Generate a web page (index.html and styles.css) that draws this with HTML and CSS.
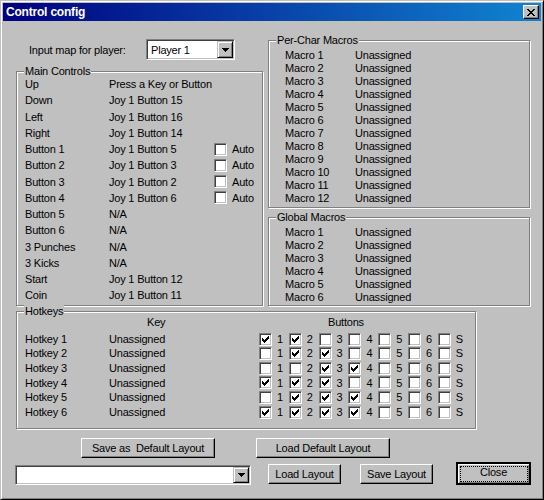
FILE: index.html
```html
<!DOCTYPE html>
<html>
<head>
<meta charset="utf-8">
<title>Control config</title>
<link rel="stylesheet" href="styles.css">
</head>
<body>
<svg class="defs" aria-hidden="true">
  <defs>
    <symbol id="chk" viewBox="1 1 11 11">
      <g fill="#000" shape-rendering="crispEdges">
        <rect x="3" y="5" width="1" height="3"/>
        <rect x="4" y="6" width="1" height="3"/>
        <rect x="5" y="7" width="1" height="3"/>
        <rect x="6" y="6" width="1" height="3"/>
        <rect x="7" y="5" width="1" height="3"/>
        <rect x="8" y="4" width="1" height="3"/>
        <rect x="9" y="3" width="1" height="3"/>
      </g>
    </symbol>
    <symbol id="arr" viewBox="0 0 7 4">
      <g fill="#000" shape-rendering="crispEdges">
        <rect x="0" y="0" width="7" height="1"/>
        <rect x="1" y="1" width="5" height="1"/>
        <rect x="2" y="2" width="3" height="1"/>
        <rect x="3" y="3" width="1" height="1"/>
      </g>
    </symbol>
  </defs>
</svg>
<div class="window">
  <div class="titlebar">
    <span class="title">Control config</span>
    <span class="title-close">
      <svg class="x-glyph" viewBox="0 0 8 7">
        <g fill="#000" shape-rendering="crispEdges">
          <rect x="0" y="0" width="2" height="1"/><rect x="6" y="0" width="2" height="1"/>
          <rect x="1" y="1" width="2" height="1"/><rect x="5" y="1" width="2" height="1"/>
          <rect x="2" y="2" width="4" height="1"/>
          <rect x="3" y="3" width="2" height="1"/>
          <rect x="2" y="4" width="4" height="1"/>
          <rect x="1" y="5" width="2" height="1"/><rect x="5" y="5" width="2" height="1"/>
          <rect x="0" y="6" width="2" height="1"/><rect x="6" y="6" width="2" height="1"/>
        </g>
      </svg>
    </span>
  </div>
  <div class="client">
    <div class="top">
      <div class="col-left">
        <div class="input-row">
          <span class="input-label">Input map for player:</span>
          <div class="combo combo-player">
            <span class="combo-text">Player 1</span>
            <span class="combo-btn"><svg class="arr"><use href="#arr"/></svg></span>
          </div>
        </div>
        <div class="group group-main">
          <span class="group-title">Main Controls</span>
          <div class="ctl-row"><span class="c-name">Up</span><span class="c-val">Press a Key or Button</span></div>
          <div class="ctl-row"><span class="c-name">Down</span><span class="c-val">Joy 1 Button 15</span></div>
          <div class="ctl-row"><span class="c-name">Left</span><span class="c-val">Joy 1 Button 16</span></div>
          <div class="ctl-row"><span class="c-name">Right</span><span class="c-val">Joy 1 Button 14</span></div>
          <div class="ctl-row"><span class="c-name">Button 1</span><span class="c-val">Joy 1 Button 5</span><span class="cb"></span><span class="cb-label">Auto</span></div>
          <div class="ctl-row"><span class="c-name">Button 2</span><span class="c-val">Joy 1 Button 3</span><span class="cb"></span><span class="cb-label">Auto</span></div>
          <div class="ctl-row"><span class="c-name">Button 3</span><span class="c-val">Joy 1 Button 2</span><span class="cb"></span><span class="cb-label">Auto</span></div>
          <div class="ctl-row"><span class="c-name">Button 4</span><span class="c-val">Joy 1 Button 6</span><span class="cb"></span><span class="cb-label">Auto</span></div>
          <div class="ctl-row"><span class="c-name">Button 5</span><span class="c-val">N/A</span></div>
          <div class="ctl-row"><span class="c-name">Button 6</span><span class="c-val">N/A</span></div>
          <div class="ctl-row"><span class="c-name">3 Punches</span><span class="c-val">N/A</span></div>
          <div class="ctl-row"><span class="c-name">3 Kicks</span><span class="c-val">N/A</span></div>
          <div class="ctl-row"><span class="c-name">Start</span><span class="c-val">Joy 1 Button 12</span></div>
          <div class="ctl-row"><span class="c-name">Coin</span><span class="c-val">Joy 1 Button 11</span></div>
        </div>
      </div>
      <div class="col-right">
        <div class="group group-perchar">
          <span class="group-title">Per-Char Macros</span>
          <div class="m-row"><span class="m-name">Macro 1</span><span>Unassigned</span></div>
          <div class="m-row"><span class="m-name">Macro 2</span><span>Unassigned</span></div>
          <div class="m-row"><span class="m-name">Macro 3</span><span>Unassigned</span></div>
          <div class="m-row"><span class="m-name">Macro 4</span><span>Unassigned</span></div>
          <div class="m-row"><span class="m-name">Macro 5</span><span>Unassigned</span></div>
          <div class="m-row"><span class="m-name">Macro 6</span><span>Unassigned</span></div>
          <div class="m-row"><span class="m-name">Macro 7</span><span>Unassigned</span></div>
          <div class="m-row"><span class="m-name">Macro 8</span><span>Unassigned</span></div>
          <div class="m-row"><span class="m-name">Macro 9</span><span>Unassigned</span></div>
          <div class="m-row"><span class="m-name">Macro 10</span><span>Unassigned</span></div>
          <div class="m-row"><span class="m-name">Macro 11</span><span>Unassigned</span></div>
          <div class="m-row"><span class="m-name">Macro 12</span><span>Unassigned</span></div>
        </div>
        <div class="group group-global">
          <span class="group-title">Global Macros</span>
          <div class="m-row"><span class="m-name">Macro 1</span><span>Unassigned</span></div>
          <div class="m-row"><span class="m-name">Macro 2</span><span>Unassigned</span></div>
          <div class="m-row"><span class="m-name">Macro 3</span><span>Unassigned</span></div>
          <div class="m-row"><span class="m-name">Macro 4</span><span>Unassigned</span></div>
          <div class="m-row"><span class="m-name">Macro 5</span><span>Unassigned</span></div>
          <div class="m-row"><span class="m-name">Macro 6</span><span>Unassigned</span></div>
        </div>
      </div>
    </div>

    <div class="group group-hotkeys">
      <span class="group-title">Hotkeys</span>
      <div class="hk-head"><span class="hk-head-key">Key</span><span>Buttons</span></div>

      <div class="hk-row"><span class="hk-name">Hotkey 1</span><span class="hk-val">Unassigned</span>
        <div class="hk-boxes">
          <span class="hk-item"><span class="cb"><svg class="chk"><use href="#chk"/></svg></span><span>1</span></span>
          <span class="hk-item"><span class="cb"><svg class="chk"><use href="#chk"/></svg></span><span>2</span></span>
          <span class="hk-item"><span class="cb"></span><span>3</span></span>
          <span class="hk-item"><span class="cb"></span><span>4</span></span>
          <span class="hk-item"><span class="cb"></span><span>5</span></span>
          <span class="hk-item"><span class="cb"></span><span>6</span></span>
          <span class="hk-item"><span class="cb"></span><span>S</span></span>
        </div>
      </div>
      <div class="hk-row"><span class="hk-name">Hotkey 2</span><span class="hk-val">Unassigned</span>
        <div class="hk-boxes">
          <span class="hk-item"><span class="cb"></span><span>1</span></span>
          <span class="hk-item"><span class="cb"><svg class="chk"><use href="#chk"/></svg></span><span>2</span></span>
          <span class="hk-item"><span class="cb"><svg class="chk"><use href="#chk"/></svg></span><span>3</span></span>
          <span class="hk-item"><span class="cb"></span><span>4</span></span>
          <span class="hk-item"><span class="cb"></span><span>5</span></span>
          <span class="hk-item"><span class="cb"></span><span>6</span></span>
          <span class="hk-item"><span class="cb"></span><span>S</span></span>
        </div>
      </div>
      <div class="hk-row"><span class="hk-name">Hotkey 3</span><span class="hk-val">Unassigned</span>
        <div class="hk-boxes">
          <span class="hk-item"><span class="cb"></span><span>1</span></span>
          <span class="hk-item"><span class="cb"></span><span>2</span></span>
          <span class="hk-item"><span class="cb"><svg class="chk"><use href="#chk"/></svg></span><span>3</span></span>
          <span class="hk-item"><span class="cb"><svg class="chk"><use href="#chk"/></svg></span><span>4</span></span>
          <span class="hk-item"><span class="cb"></span><span>5</span></span>
          <span class="hk-item"><span class="cb"></span><span>6</span></span>
          <span class="hk-item"><span class="cb"></span><span>S</span></span>
        </div>
      </div>
      <div class="hk-row"><span class="hk-name">Hotkey 4</span><span class="hk-val">Unassigned</span>
        <div class="hk-boxes">
          <span class="hk-item"><span class="cb"><svg class="chk"><use href="#chk"/></svg></span><span>1</span></span>
          <span class="hk-item"><span class="cb"><svg class="chk"><use href="#chk"/></svg></span><span>2</span></span>
          <span class="hk-item"><span class="cb"><svg class="chk"><use href="#chk"/></svg></span><span>3</span></span>
          <span class="hk-item"><span class="cb"></span><span>4</span></span>
          <span class="hk-item"><span class="cb"></span><span>5</span></span>
          <span class="hk-item"><span class="cb"></span><span>6</span></span>
          <span class="hk-item"><span class="cb"></span><span>S</span></span>
        </div>
      </div>
      <div class="hk-row"><span class="hk-name">Hotkey 5</span><span class="hk-val">Unassigned</span>
        <div class="hk-boxes">
          <span class="hk-item"><span class="cb"></span><span>1</span></span>
          <span class="hk-item"><span class="cb"><svg class="chk"><use href="#chk"/></svg></span><span>2</span></span>
          <span class="hk-item"><span class="cb"><svg class="chk"><use href="#chk"/></svg></span><span>3</span></span>
          <span class="hk-item"><span class="cb"><svg class="chk"><use href="#chk"/></svg></span><span>4</span></span>
          <span class="hk-item"><span class="cb"></span><span>5</span></span>
          <span class="hk-item"><span class="cb"></span><span>6</span></span>
          <span class="hk-item"><span class="cb"></span><span>S</span></span>
        </div>
      </div>
      <div class="hk-row"><span class="hk-name">Hotkey 6</span><span class="hk-val">Unassigned</span>
        <div class="hk-boxes">
          <span class="hk-item"><span class="cb"><svg class="chk"><use href="#chk"/></svg></span><span>1</span></span>
          <span class="hk-item"><span class="cb"><svg class="chk"><use href="#chk"/></svg></span><span>2</span></span>
          <span class="hk-item"><span class="cb"><svg class="chk"><use href="#chk"/></svg></span><span>3</span></span>
          <span class="hk-item"><span class="cb"><svg class="chk"><use href="#chk"/></svg></span><span>4</span></span>
          <span class="hk-item"><span class="cb"></span><span>5</span></span>
          <span class="hk-item"><span class="cb"></span><span>6</span></span>
          <span class="hk-item"><span class="cb"></span><span>S</span></span>
        </div>
      </div>
    </div>

    <div class="btn-row1">
      <button class="btn btn-wide btn-savedef">Save as&nbsp; Default Layout</button>
      <button class="btn btn-wide btn-loaddef">Load Default Layout</button>
    </div>
    <div class="btn-row2">
      <div class="combo combo-layout">
        <span class="combo-text"></span>
        <span class="combo-btn"><svg class="arr"><use href="#arr"/></svg></span>
      </div>
      <button class="btn btn-small btn-load">Load Layout</button>
      <button class="btn btn-small btn-save">Save Layout</button>
      <button class="btn btn-close">Close</button>
    </div>
  </div>
</div>
</body>
</html>
```
FILE: styles.css
```css
html, body {
  margin: 0;
  padding: 0;
  background: #c0c0c0;
}
body {
  width: 544px;
  height: 500px;
  overflow: hidden;
}
.defs {
  position: absolute;
  width: 0;
  height: 0;
  overflow: hidden;
}
.window {
  box-sizing: border-box;
  width: 544px;
  height: 500px;
  background: #c0c0c0;
  border: 1px solid;
  border-color: #c0c0c0 #000 #000 #c0c0c0;
  box-shadow: inset 1px 1px #fff, inset -1px -1px #808080;
  padding: 2px;
  display: flex;
  flex-direction: column;
  font-family: "Liberation Sans", Arial, sans-serif;
  font-size: 11px;
  letter-spacing: -0.2px;
  color: #000;
}
.titlebar {
  flex: 0 0 18px;
  height: 18px;
  background: linear-gradient(to right, #000080, #1084d0);
  display: flex;
  align-items: center;
  justify-content: space-between;
  color: #fff;
}
.title {
  font-weight: bold;
  font-size: 12px;
  letter-spacing: -0.2px;
  line-height: 18px;
  padding-left: 3px;
}
.title-close {
  box-sizing: border-box;
  width: 16px;
  height: 14px;
  margin-right: 2px;
  background: #c0c0c0;
  border: 1px solid;
  border-color: #fff #000 #000 #fff;
  box-shadow: inset -1px -1px #808080;
  display: flex;
  align-items: center;
  justify-content: center;
}
.x-glyph {
  display: block;
  width: 8px;
  height: 7px;
  margin-left: -1px;
}
.client {
  flex: 1;
  display: flex;
  flex-direction: column;
}

/* top area */
.top {
  display: flex;
  margin-left: 13px;
  gap: 5px;
}
.col-left {
  width: 247px;
  display: flex;
  flex-direction: column;
}
.col-right {
  width: 262px;
  display: flex;
  flex-direction: column;
}
.input-row {
  display: flex;
  align-items: center;
  height: 21px;
  margin-top: 18px;
  padding-left: 13px;
}
.input-label {
  width: 117px;
}

/* combo box */
.combo {
  box-sizing: border-box;
  display: flex;
  align-items: stretch;
  background: #fff;
  border: 1px solid;
  border-color: #808080 #fff #fff #808080;
  box-shadow: inset 1px 1px #404040, inset -1px -1px #c0c0c0;
  padding: 1px;
}
.combo-player {
  width: 89px;
  height: 21px;
}
.combo-text {
  flex: 1;
  display: flex;
  align-items: center;
  padding-left: 3px;
}
.combo-btn {
  box-sizing: border-box;
  width: 16px;
  background: #c0c0c0;
  border: 1px solid;
  border-color: #c0c0c0 #000 #000 #c0c0c0;
  box-shadow: inset 1px 1px #fff, inset -1px -1px #808080;
  display: flex;
  align-items: center;
  justify-content: center;
}
.arr {
  display: block;
  width: 7px;
  height: 4px;
}

/* group boxes */
.group {
  position: relative;
  box-sizing: border-box;
  border: 1px solid #808080;
  box-shadow: inset 1px 1px #fff, 1px 1px #fff;
  padding-left: 8px;
}
.group-title {
  position: absolute;
  left: 7px;
  top: -7px;
  line-height: 13px;
  padding: 0 1px;
  background: #c0c0c0;
}
.group-main {
  height: 235px;
  margin-top: 11px;
  padding-top: 4px;
}
.ctl-row {
  display: flex;
  align-items: center;
  height: 16.25px;
  line-height: 16.25px;
}
.c-name {
  width: 84px;
  flex: 0 0 84px;
}
.c-val {
  width: 105px;
  flex: 0 0 105px;
}

.group-perchar {
  height: 168px;
  margin-top: 19px;
  padding-top: 7.5px;
  padding-left: 16px;
}
.group-global {
  height: 89px;
  margin-top: 9px;
  padding-top: 8px;
  padding-left: 16px;
}
.m-row {
  display: flex;
  height: 13px;
  line-height: 13px;
}
.m-name {
  width: 70px;
  flex: 0 0 70px;
}

/* checkbox */
.cb {
  box-sizing: border-box;
  flex: 0 0 13px;
  width: 13px;
  height: 13px;
  background: #fff;
  border: 1px solid;
  border-color: #808080 #fff #fff #808080;
  box-shadow: inset 1px 1px #404040, inset -1px -1px #c0c0c0;
  margin-right: 5px;
}
.chk {
  display: block;
  width: 11px;
  height: 11px;
}

/* hotkeys */
.group-hotkeys {
  width: 460px;
  height: 118px;
  margin: 5px 0 0 13px;
  padding-top: 2px;
}
.hk-head {
  display: flex;
  height: 17.75px;
  line-height: 16px;
}
.hk-head-key {
  margin-left: 122px;
  width: 181px;
}
.hk-row {
  display: flex;
  align-items: center;
  height: 14.625px;
  line-height: 14.625px;
}
.hk-name {
  flex: 0 0 84px;
}
.hk-val {
  flex: 0 0 150px;
}
.hk-boxes {
  display: flex;
  align-items: center;
}
.hk-item {
  flex: 0 0 29.8px;
  display: flex;
  align-items: center;
}

/* buttons */
.btn {
  box-sizing: border-box;
  height: 20px;
  margin: 0;
  padding: 0 0 1px 0;
  background: #c0c0c0;
  border: 1px solid;
  border-color: #fff #000 #000 #fff;
  box-shadow: inset -1px -1px #808080;
  font: inherit;
  letter-spacing: inherit;
  color: #000;
  display: flex;
  align-items: center;
  justify-content: center;
  white-space: pre;
}
.btn-row1 {
  display: flex;
  margin-top: 9px;
  padding-left: 78px;
  gap: 41px;
}
.btn-wide {
  width: 134px;
}
.btn-row2 {
  display: flex;
  align-items: flex-start;
  margin-top: 4px;
  padding-left: 12px;
}
.combo-layout {
  width: 236px;
  height: 20px;
  margin-top: 3px;
}
.btn-small {
  width: 73px;
  margin-top: 2px;
}
.btn-load {
  margin-left: 17px;
}
.btn-save {
  margin-left: 19px;
}
.btn-close {
  position: relative;
  width: 75px;
  height: 23px;
  margin-left: 23px;
  border: 2px solid;
  border-color: #000;
  box-shadow: inset 1px 1px #fff, inset -1px -1px #808080;
  padding-bottom: 3px;
}
.btn-close::after {
  content: "";
  position: absolute;
  left: 2px;
  right: 1px;
  top: 2px;
  bottom: 1px;
  border: 1px dotted #000;
}
```
